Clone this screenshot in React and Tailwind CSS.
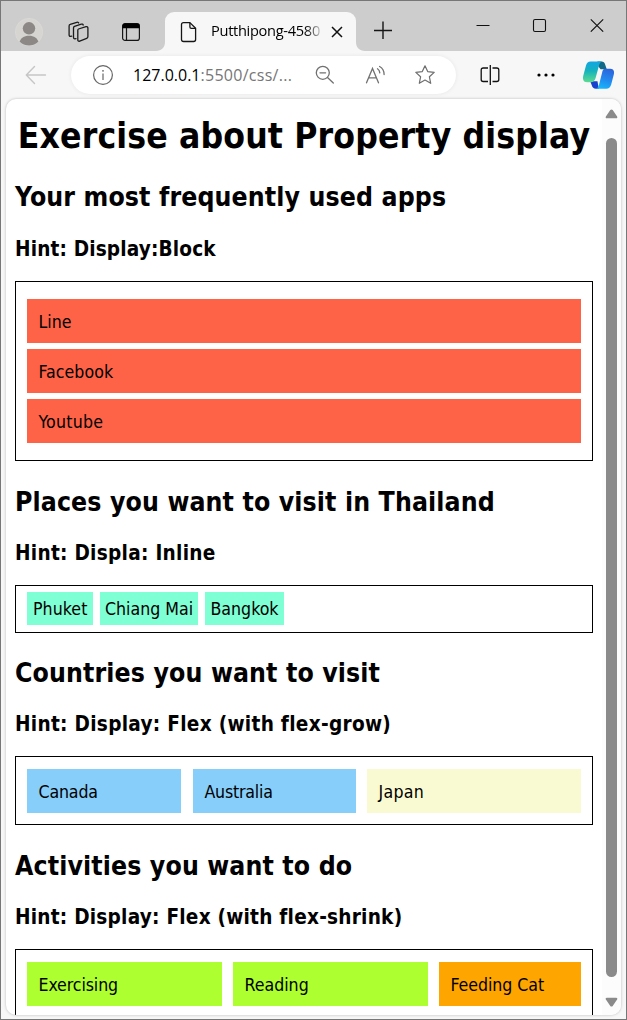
import React from "react";

function ProfileIcon() {
  return (
    <svg width="28" height="28" viewBox="0 0 28 28">
      <defs>
        <clipPath id="avatar">
          <circle cx="14" cy="14" r="13.5" />
        </clipPath>
      </defs>
      <circle cx="14" cy="14" r="13.7" fill="#d7d5d1" stroke="#dedcd9" strokeWidth=".6" />
      <g clipPath="url(#avatar)" fill="#8b8886">
        <circle cx="14" cy="10.3" r="6.2" />
        <path d="M3.8 25.5C5.5 20 9 17.8 14 17.8s8.500 2.200 10.200 7.700C21.500 27.200 18 28 14 28S6.500 27.200 3.800 25.500Z" />
      </g>
    </svg>
  );
}

function WorkspacesIcon() {
  return (
    <svg width="22" height="22" viewBox="0 0 22 22" fill="none" stroke="#1b1b1b" strokeWidth="1.300" strokeLinejoin="round" strokeLinecap="round">
      <path d="M11.500 8 19 5.700c1-.3 1.900.3 1.900 1.300v8.500c0 .9-.4 1.500-1.200 1.800l-7 2.800c-1.100.4-1.900-.1-1.900-1.200V9.300c0-.7.200-1.100.7-1.300Z" />
      <path d="M9 17.600l-1.200.2c-.9 0-1.300-.6-1.300-1.400V6.900c0-.8.300-1.300 1-1.600l6.800-2.100c1-.3 1.700 0 1.900.8" />
      <path d="M4.700 15.200l-1.300.1c-.8 0-1.300-.5-1.300-1.300V5c0-.8.4-1.400 1.100-1.600l6.600-2.100c.9-.3 1.700 0 1.900.7" />
    </svg>
  );
}

function TabActionsIcon() {
  return (
    <svg width="20" height="20" viewBox="0 0 20 20" fill="none">
      <rect x="1.600" y="1.600" width="16.800" height="16.800" rx="2.500" stroke="#151515" strokeWidth="1.200" />
      <path d="M1.500 6.200V3.800c0-1.500.8-2.300 2.300-2.300h12.400c1.500 0 2.300.8 2.300 2.300v2.400Z" fill="#000" />
      <path d="M5.500 6v12.400" stroke="#151515" strokeWidth="1.200" />
    </svg>
  );
}

function PageIcon() {
  return (
    <svg width="18" height="22" viewBox="0 0 18 22" fill="none" stroke="#161616" strokeWidth="1.300" strokeLinejoin="round">
      <path d="M3.500 1.600h6.400l5.700 5.700v11.200c0 1.300-.7 2-2 2H3.500c-1.300 0-2-.7-2-2V3.600c0-1.300.7-2 2-2Z" />
      <path d="M9.900 1.800v4.100c0 .9.500 1.400 1.400 1.400h4.100" />
    </svg>
  );
}

function CrossIcon() {
  return (
    <svg width="12" height="12" viewBox="0 0 12 12" stroke="#111" strokeWidth="1.500">
      <path d="m1 1 10 10M11 1 1 11" />
    </svg>
  );
}

function TabCurve({ flip }) {
  return (
    <svg className={flip ? "shrink-0 self-end -scale-x-100" : "shrink-0 self-end"} width="9" height="9" viewBox="0 0 9 9">
      <path d="M9 0v9H0c5.500 0 9-3.500 9-9Z" fill="#f7f7f7" />
    </svg>
  );
}

function BackIcon() {
  return (
    <svg width="22" height="20" viewBox="0 0 22 20" fill="none" stroke="#c6c6c6" strokeWidth="1.400" strokeLinecap="round" strokeLinejoin="round">
      <path d="M9.500 1.500 1.300 10l8.200 8.500M1.500 10h19" />
    </svg>
  );
}

function InfoIcon() {
  return (
    <svg width="22" height="22" viewBox="0 0 22 22" fill="none" stroke="#666" strokeWidth="1.200">
      <circle cx="11" cy="11" r="9.400" />
      <path d="M11 9.500v6.500" />
      <circle cx="11" cy="6.800" r=".9" fill="#666" stroke="none" />
    </svg>
  );
}

function ZoomOutIcon() {
  return (
    <svg width="20" height="20" viewBox="0 0 20 20" fill="none" stroke="#717171" strokeWidth="1.300" strokeLinecap="round">
      <circle cx="7.800" cy="7.800" r="6.500" />
      <path d="M5 7.800h5.600M12.500 12.500l5.800 5.500" />
    </svg>
  );
}

function ReadAloudIcon() {
  return (
    <svg width="21" height="20" viewBox="0 0 21 20" fill="none" stroke="#717171" strokeWidth="1.300" strokeLinecap="round">
      <path d="M1.500 17.800 7.500 3.500l6 14.300M3.700 12.800h7.600" />
      <path d="M12.500 3.800c1.400.9 2.200 2.200 2.300 4.100M14.600 1.500c2.900 1.600 4.500 4.300 4.500 8" />
    </svg>
  );
}

function StarIcon() {
  return (
    <svg width="22" height="22" viewBox="0 0 22 22" fill="none" stroke="#6e6e6e" strokeWidth="1.200" strokeLinejoin="round">
      <path d="m11 1.800 2.700 5.800 6.500.8-4.800 4.400 1.300 6.500-5.700-3.200-5.700 3.200 1.300-6.500-4.800-4.400 6.500-.8Z" />
    </svg>
  );
}

function SplitIcon() {
  return (
    <svg width="20" height="20" viewBox="0 0 20 20" fill="none" stroke="#111" strokeWidth="1.300">
      <path d="M8 3H3.200c-1.300 0-2 .7-2 2v9.500c0 1.300.7 2 2 2H8M12.500 3h4.300c1.300 0 2 .7 2 2v9.500c0 1.300-.7 2-2 2h-4.300M10.300 0v20" />
    </svg>
  );
}

function CopilotIcon() {
  return (
    <svg width="31" height="28" viewBox="0 0 30 27" preserveAspectRatio="none">
      <defs>
        <linearGradient id="cpA" x1="0" y1="0" x2="0" y2="1">
          <stop offset="0" stopColor="#13a5e4" />
          <stop offset=".45" stopColor="#14b2bd" />
          <stop offset="1" stopColor="#5edb91" />
        </linearGradient>
        <linearGradient id="cpB" x1=".7" y1="0" x2=".4" y2="1">
          <stop offset="0" stopColor="#2b63dc" />
          <stop offset=".5" stopColor="#2386ed" />
          <stop offset="1" stopColor="#18b4fa" />
        </linearGradient>
      </defs>
      <path d="M14 .5h3.800c2.100 0 3.100 1.100 3.700 3l1.500 4.500h-6L14 4Z" fill="#126987" />
      <path d="M7 19.500h7l1.300 7.300h-2.500c-2.700 0-3.700-1.400-4.300-3.400Z" fill="#1742cd" />
      <path d="M7.400.5h11c-1.600.5-2.400 2-3 4l-3.200 12c-.8 2.700-2 4-4.700 4H4.300c-3.600 0-4.900-2.300-4.100-6L2.900 4.300C3.700 1.700 5 .5 7.400.5Z" fill="url(#cpA)" />
      <path d="M21.500 7.500h4.900c3 0 4.200 2.200 3.400 5.400L27.200 23c-.9 2.500-2.200 3.800-4.600 3.800h-10c1.600-.6 2.300-2 2.900-4l2.900-11.300c.6-2.600 1.300-4 3.100-4Z" fill="url(#cpB)" />
    </svg>
  );
}

function ScrollArrow({ down }) {
  return (
    <svg className={down ? "rotate-180" : ""} width="13" height="10" viewBox="0 0 13 10">
      <path d="M5.300 1.100c.6-.9 1.800-.9 2.400 0l4.400 6.300c.6.900.1 1.800-.9 1.800H1.800c-1 0-1.500-.9-.9-1.800Z" fill="#8a8a8a" />
    </svg>
  );
}

function TitleBar() {
  return (
    <header className="flex h-[50px] shrink-0 bg-[#cdcdcd]">
      <div className="flex h-full w-[155px] shrink-0 items-center pt-3">
        <div className="ml-3.5">
          <ProfileIcon />
        </div>
        <div className="ml-6">
          <WorkspacesIcon />
        </div>
        <div className="ml-8">
          <TabActionsIcon />
        </div>
      </div>
      <TabCurve />
      <div className="mt-[11px] flex w-[191px] shrink-0 items-center rounded-t-[9px] bg-[#f7f7f7] pl-[15px]">
        <PageIcon />
        <div className="ml-[13px] w-[111px] overflow-hidden bg-linear-to-r from-black from-82% to-[#ddd] bg-clip-text pb-0.5 font-['Open_Sans',sans-serif] text-[14.6px] tracking-[-0.3px] whitespace-nowrap text-transparent">
          Putthipong-4580
        </div>
        <div className="ml-[9px]">
          <CrossIcon />
        </div>
      </div>
      <TabCurve flip />
      <svg className="mt-[19px] ml-2" width="20" height="20" viewBox="0 0 20 20" stroke="#151515" strokeWidth="1.400">
        <path d="M10 1.500v17.500M1 10.500h18" />
      </svg>
      <div className="ml-auto flex h-12 items-center pr-[22px]">
        <svg width="14" height="14" viewBox="0 0 14 14" stroke="#111">
          <path d="M.5 7.500h13" />
        </svg>
        <svg className="ml-[42px]" width="15" height="15" viewBox="0 0 15 15" fill="none" stroke="#111" strokeWidth="1.100">
          <rect x="1.500" y="1.500" width="12" height="12" rx="1.500" />
        </svg>
        <svg className="ml-[43px]" width="14" height="14" viewBox="0 0 14 14" stroke="#111" strokeWidth="1.100">
          <path d="m.8 1.300 12.400 12.400M13.200 1.300.8 13.700" />
        </svg>
      </div>
    </header>
  );
}

function Toolbar() {
  return (
    <div className="flex h-12 shrink-0 items-center">
      <div className="ml-6">
        <BackIcon />
      </div>
      <div className="ml-6 flex h-[38px] w-[385px] items-center rounded-full bg-white pl-[21px] shadow-[0_0_4px_rgba(0,0,0,0.07)]">
        <InfoIcon />
        <div className="ml-[19px] w-[160px] font-['Open_Sans',sans-serif] text-[16px] whitespace-nowrap text-[#767676]">
          <span className="text-black">127.0.0.1</span>
          <span className="tracking-[0.28px]">:5500/css/...</span>
        </div>
        <div className="ml-[22px]">
          <ZoomOutIcon />
        </div>
        <div className="ml-[30px]">
          <ReadAloudIcon />
        </div>
        <div className="ml-[28px]">
          <StarIcon />
        </div>
      </div>
      <div className="ml-6">
        <SplitIcon />
      </div>
      <svg className="ml-[37px]" width="18" height="4" viewBox="0 0 18 4">
        <circle cx="2" cy="2" r="1.600" />
        <circle cx="9" cy="2" r="1.600" />
        <circle cx="16" cy="2" r="1.600" />
      </svg>
      <div className="ml-7">
        <CopilotIcon />
      </div>
    </div>
  );
}

function SectionTitle({ title, hint, className }) {
  return (
    <div className={"flex flex-col " + className}>
      <h2 className="text-[26.4px] leading-8 font-bold tracking-[0.12px]">{title}</h2>
      <h3 className="text-[20.6px] leading-[25px] font-bold">{hint}</h3>
    </div>
  );
}

function Item({ className, children }) {
  return <div className={"h-11 pt-px pl-[11.5px] leading-[44px] " + className}>{children}</div>;
}

export default function App() {
  return (
    <div className="flex h-[1020px] w-[627px] flex-col overflow-hidden border border-[#777] bg-[#f7f7f7] text-black">
      <TitleBar />
      <Toolbar />
      <main className="mx-[5px] flex h-[916px] shrink-0 overflow-hidden rounded-[10px] bg-white font-['DejaVu_Sans_Condensed','DejaVu_Sans',sans-serif] text-[17.6px] whitespace-nowrap shadow-[0_0_3px_rgba(0,0,0,0.25)]">
        <div className="w-[596px] shrink-0 px-[9px]">
          <h1 className="mt-4 text-center text-[35.2px] leading-[42px] font-bold tracking-[0.13px]">
            Exercise about Property display
          </h1>

          <SectionTitle className="mt-6 gap-6 tracking-[0.15px]" title="Your most frequently used apps" hint="Hint: Display:Block" />
          <div className="mt-[19px] flex h-[180px] flex-col gap-1.5 border border-black px-[11px] pt-[17px]">
            <Item className="bg-[#ff6347]">Line</Item>
            <Item className="bg-[#ff6347] tracking-[0.05px]">Facebook</Item>
            <Item className="bg-[#ff6347] tracking-[0.25px]">Youtube</Item>
          </div>

          <SectionTitle className="mt-[25px] gap-[23px] tracking-[0.28px]" title="Places you want to visit in Thailand" hint="Hint: Displa: Inline" />
          <div className="mt-[19px] flex h-12 gap-[7px] border border-black px-[11px] pt-1.5 leading-[33px]">
            <span className="h-[33px] w-[66px] bg-[#7fffd4] pt-px pl-1.5 tracking-[0.05px]">Phuket</span>
            <span className="h-[33px] w-[98px] bg-[#7fffd4] pt-px pl-[5px]">Chiang Mai</span>
            <span className="h-[33px] w-[79px] bg-[#7fffd4] pt-px pl-[5.5px]">Bangkok</span>
          </div>

          <SectionTitle className="mt-6 gap-[23px] tracking-[0.29px]" title="Countries you want to visit" hint="Hint: Display: Flex (with flex-grow)" />
          <div className="mt-[19px] flex h-[69px] border border-black px-[11px] pt-3">
            <Item className="w-[154px] bg-[#87cefa] tracking-[-0.15px]">Canada</Item>
            <Item className="ml-3 w-[163px] bg-[#87cefa] tracking-[-0.2px]">Australia</Item>
            <Item className="ml-[11px] w-[214px] bg-[#fafad2] tracking-[0.3px]">Japan</Item>
          </div>

          <SectionTitle className="mt-[25px] gap-[23px] tracking-[0.23px]" title="Activities you want to do" hint="Hint: Display: Flex (with flex-shrink)" />
          <div className="mt-[19px] flex h-[69px] gap-[11px] border border-black px-[11px] pt-3">
            <Item className="w-[195px] bg-[#adff2f] tracking-[-0.1px]">Exercising</Item>
            <Item className="w-[195px] bg-[#adff2f]">Reading</Item>
            <Item className="w-[142px] bg-[#ffa500] tracking-[-0.05px]">Feeding Cat</Item>
          </div>
        </div>
        <div className="flex grow flex-col items-center bg-[#fcfcfc] pt-2.5">
          <ScrollArrow />
          <div className="mt-[19px] h-[839px] w-[11px] rounded-full bg-[#8a8a8a]" />
          <div className="mt-5">
            <ScrollArrow down />
          </div>
        </div>
      </main>
    </div>
  );
}
